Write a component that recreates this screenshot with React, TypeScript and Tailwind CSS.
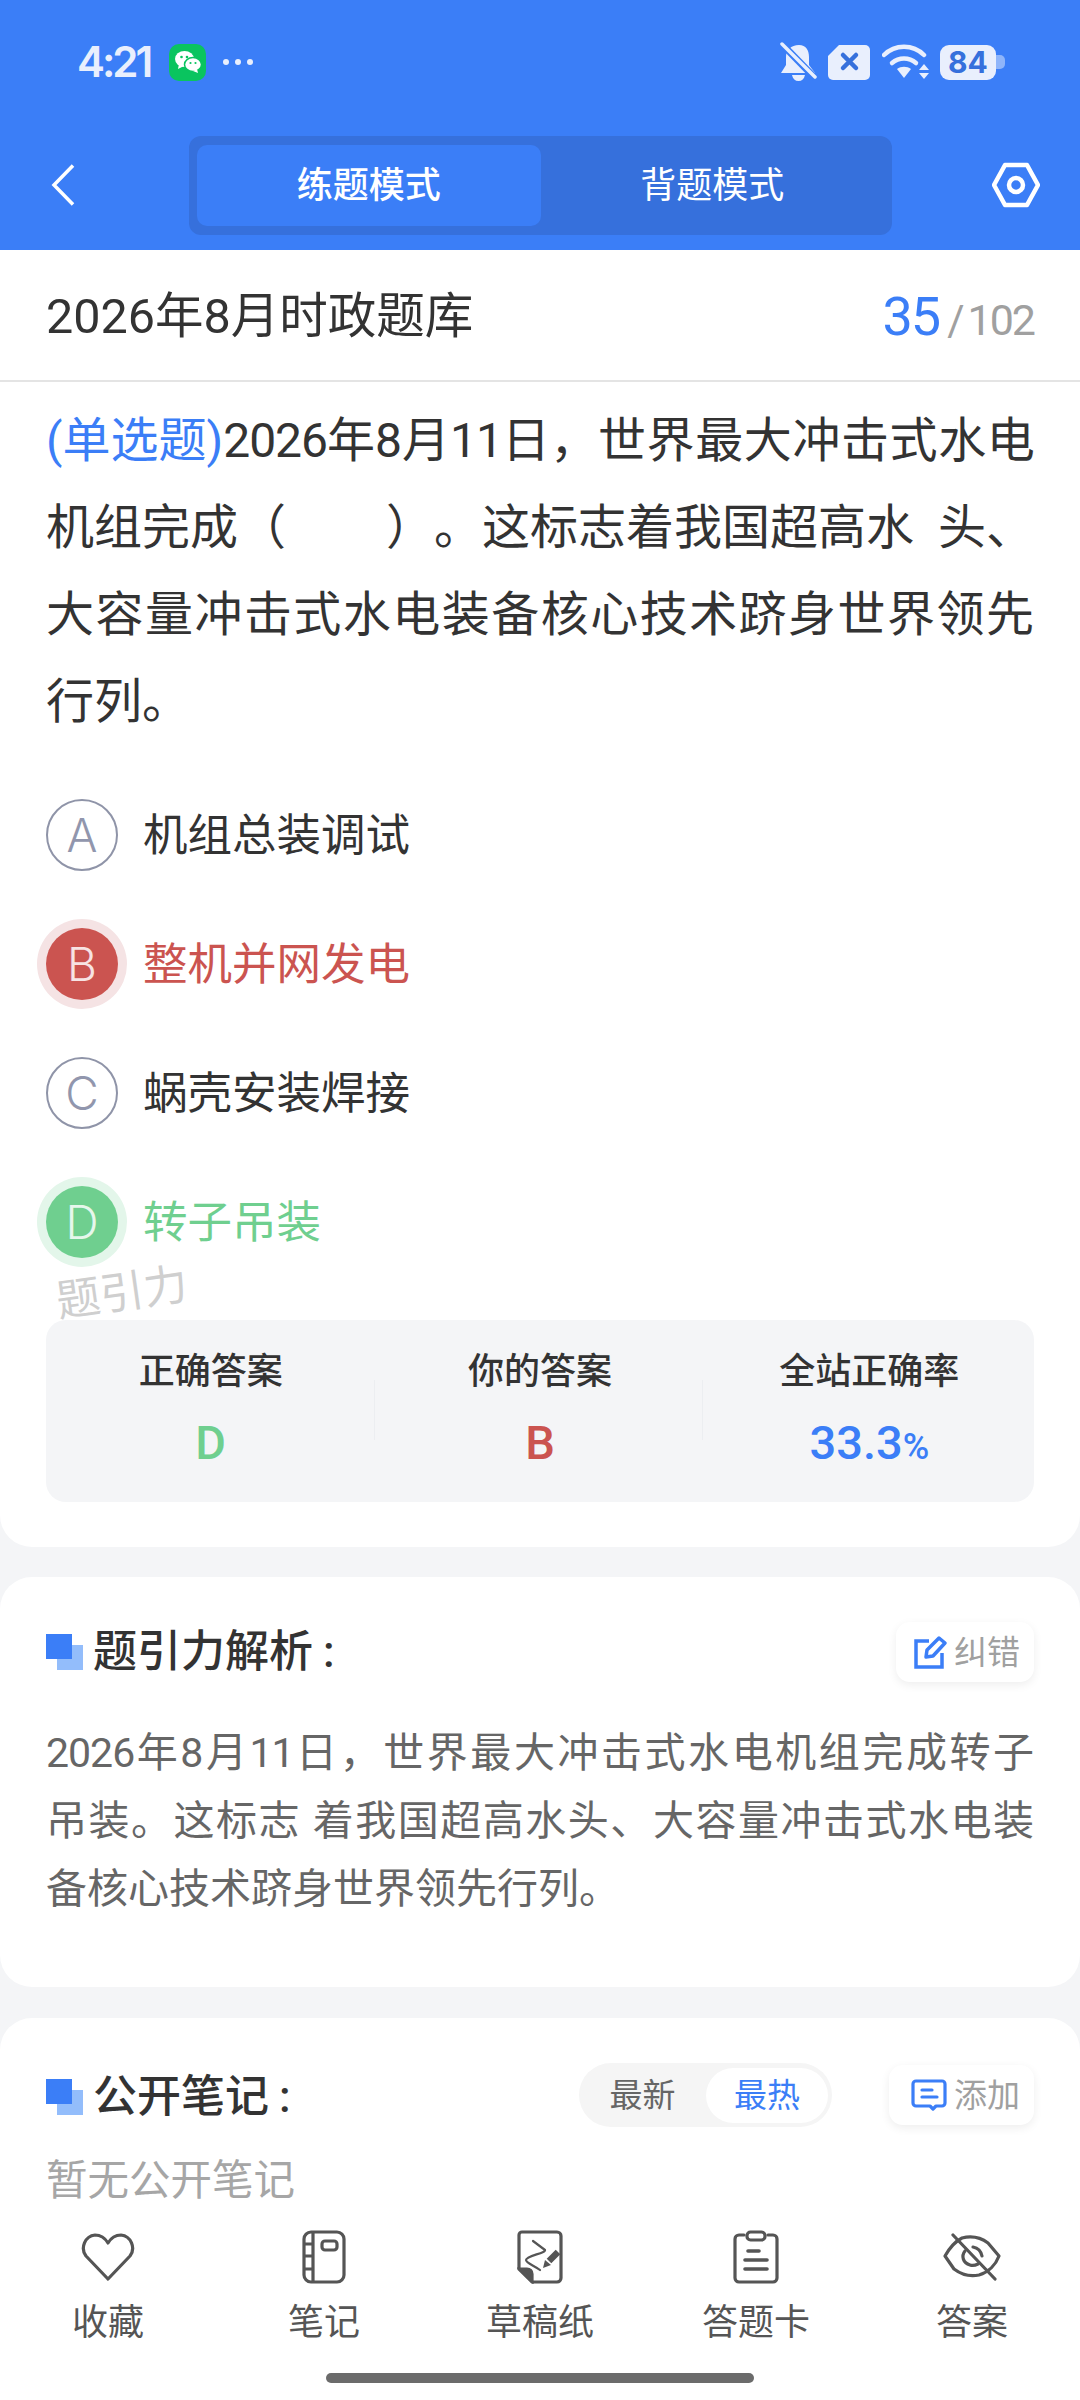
import type { ReactNode } from 'react'

const cjk = { fontFamily: '"Roboto", "Noto Sans CJK SC", sans-serif' }

const options = [
  { key: 'A', text: '机组总装调试', state: 'idle' },
  { key: 'B', text: '整机并网发电', state: 'wrong' },
  { key: 'C', text: '蜗壳安装焊接', state: 'idle' },
  { key: 'D', text: '转子吊装', state: 'right' },
]

function Bullet() {
  return (
    <span className="relative block w-[37px] h-[36px] shrink-0">
      <span className="absolute left-[11px] top-[11px] w-[26px] h-[25px] bg-[#93bdfb]" />
      <span className="absolute left-0 top-0 w-[26px] h-[25px] bg-[#3b7ef7]" />
    </span>
  )
}

function StatusIcons() {
  return (
    <div className="flex items-center">
      <svg width="38" height="40" viewBox="0 0 38 40" fill="#e9effd">
        <path d="M20 3c7 0 10 5 10 12v8l6 8H2l5-8v-8c0-7 5-12 13-12z" />
        <path d="M13 33h13c-1 4-3 6-6.500 6S14 37 13 33z" />
        <path d="M2 1l34 35" stroke="#3b7ef7" strokeWidth="7" />
        <path d="M3 2l33 33" stroke="#e9effd" strokeWidth="3.500" strokeLinecap="round" />
      </svg>
      <svg className="ml-[10px]" width="44" height="36" viewBox="0 0 44 36">
        <path d="M12 1h26a5 5 0 0 1 5 5v25a5 5 0 0 1-5 5H6a5 5 0 0 1-5-5V12z" fill="#e9effd" />
        <path d="M16 11l13 13M29 11L16 24" stroke="#3670dc" strokeWidth="4.500" strokeLinecap="round" />
      </svg>
      <svg className="ml-[11px]" width="48" height="36" viewBox="0 0 48 36" fill="none">
        <path d="M2 11c11-11 29-11 40 0" stroke="#e9effd" strokeWidth="4.500" strokeLinecap="round" />
        <path d="M10 19c7-6 17-6 24 0" stroke="#e9effd" strokeWidth="4.500" strokeLinecap="round" />
        <path d="M15 25c4-3 10-3 14 0l-7 9z" fill="#e9effd" />
        <path d="M42 20l5 6H37zM42 35l5-6H37z" fill="#e9effd" />
      </svg>
      <div className="ml-[10px] flex items-center">
        <div
          className="w-[56px] h-[35px] bg-[#e9effd] rounded-[9px] flex items-center justify-center text-[30px] font-bold text-[#3670dc]"
          style={{ fontFamily: '"Inter", sans-serif' }}
        >
          84
        </div>
        <div className="w-[9px] h-[14px] bg-[#8fb5fa] rounded-r-[5px]" />
      </div>
    </div>
  )
}

function WeChat() {
  return (
    <div className="w-[37px] h-[37px] rounded-[10px] bg-[#0ac45f] flex items-center justify-center">
      <svg width="28" height="24" viewBox="0 0 28 24">
        <ellipse cx="10.500" cy="9" rx="9.500" ry="8" fill="#fff" />
        <path d="M5 14l-1 5 6-3z" fill="#fff" />
        <ellipse cx="19" cy="14.500" rx="8.500" ry="7" fill="#fff" stroke="#0ac45f" strokeWidth="1.500" />
        <path d="M23 19l1 4-5-2z" fill="#fff" />
        <circle cx="7.500" cy="7" r="1.300" fill="#0ac45f" />
        <circle cx="13" cy="7" r="1.300" fill="#0ac45f" />
        <circle cx="16.500" cy="13" r="1.100" fill="#0ac45f" />
        <circle cx="21.500" cy="13" r="1.100" fill="#0ac45f" />
      </svg>
    </div>
  )
}

function HeaderBar() {
  return (
    <header className="bg-[#3b7ef7] h-[250px] shrink-0">
      <div className="h-[136px] pl-[77px] pr-[75px] pb-[12px] flex items-center justify-between">
        <div className="flex items-center">
          <span
            className="w-[79px] text-[42px] font-semibold tracking-[-3px] text-[#e9effd] leading-none"
            style={{ fontFamily: '"Inter", sans-serif' }}
          >
            4:21
          </span>
          <span className="ml-[13px]">
            <WeChat />
          </span>
          <span className="ml-[17px] flex gap-[6px]">
            <i className="block w-[6px] h-[6px] rounded-full bg-[#e9effd]" />
            <i className="block w-[6px] h-[6px] rounded-full bg-[#e9effd]" />
            <i className="block w-[6px] h-[6px] rounded-full bg-[#e9effd]" />
          </span>
        </div>
        <StatusIcons />
      </div>
      <div className="flex items-start">
        <svg className="ml-[51px] mt-[28px]" width="24" height="42" viewBox="0 0 24 42" fill="none">
          <path d="M22 1.500L3 21l19 19.500" stroke="#fff" strokeWidth="3.500" />
        </svg>
        <div className="ml-[114px] w-[703px] h-[99px] rounded-[12px] bg-[#3670dc] p-[9px_8px] grid grid-cols-2 text-[36px] font-medium text-white leading-none">
          <div className="rounded-[10px] bg-[#3b7ef7] flex items-center justify-center">练题模式</div>
          <div className="flex items-center justify-center font-normal">背题模式</div>
        </div>
        <svg className="ml-[100px] mt-[26px]" width="48" height="46" viewBox="0 0 48 46" fill="none">
          <path d="M13 3h22l11 20-11 20H13L2 23z" stroke="#fff" strokeWidth="4.500" strokeLinejoin="round" />
          <circle cx="24" cy="23" r="7" stroke="#fff" strokeWidth="4.500" />
        </svg>
      </div>
    </header>
  )
}

function OptionRow({ k, text, state }: { k: string; text: string; state: string }) {
  const circle =
    state === 'wrong'
      ? 'bg-[#cb5450] text-[#f7e3e3] ring-[9px] ring-[#f5e3e4]'
      : state === 'right'
        ? 'bg-[#6fcf8f] text-[#e6f7ec] ring-[9px] ring-[#e3f6ea]'
        : 'border-2 border-[#8f94a8] text-[#9196ad]'
  const label = state === 'wrong' ? 'text-[#cb5450]' : state === 'right' ? 'text-[#6fcf8f]' : 'text-[#333333]'
  return (
    <div className="h-[129px] flex items-center">
      <div
        className={`w-[72px] h-[72px] -mt-[4px] rounded-full flex items-center justify-center text-[46px] font-light leading-none ${circle}`}
        style={{ fontFamily: '"Inter", sans-serif' }}
      >
        {k}
      </div>
      <span className={`ml-[25px] text-[44.500px] leading-none ${label}`}>{text}</span>
    </div>
  )
}

function Stat({ label, children }: { label: string; children: ReactNode }) {
  return (
    <div className="flex flex-col items-center">
      <span className="text-[36px] font-medium text-[#333333] leading-[44px]">{label}</span>
      <span className="mt-[23px] h-[50px] flex items-center text-[47px] font-medium leading-none">{children}</span>
    </div>
  )
}

function QuestionCard() {
  return (
    <section className="bg-white rounded-b-[32px] relative pb-[45px]">
      <div className="h-[132px] pt-[4px] px-[46px] flex items-center justify-between border-b-2 border-[#e4e4e4]">
        <h1 className="text-[48.500px] font-normal text-[#333333] leading-none">2026年8月时政题库</h1>
        <div className="flex items-baseline leading-none">
          <span className="text-[54px] tracking-[-2px] text-[#3b7ef7]">35</span>
          <span className="ml-[8px] text-[42px] text-[#a0a0a0]">/</span>
          <span className="ml-[3px] text-[43px] tracking-[-2px] text-[#a0a0a0]">102</span>
        </div>
      </div>
      <div className="px-[46px] pt-[15px] text-[48px] leading-[87px] text-[#333333]">
        <div className="whitespace-nowrap">
          <span className="text-[#3b7ef7]">(单选题)</span>
          <span className="tracking-[-1px]">2026</span>年8月<span className="tracking-[-1px]">11</span>日，
          <span className="tracking-[0.6px]">世界最大冲击式水电</span>
        </div>
        <div className="whitespace-nowrap">
          机组完成（<span className="inline-block w-[100px]" />）。这标志着我国超高水<span className="inline-block w-[24px]" />头、
        </div>
        <div className="[text-align-last:justify]">大容量冲击式水电装备核心技术跻身世界领先</div>
        <div>行列。</div>
      </div>
      <div className="px-[46px] mt-[27px]">
        {options.map(o => (
          <OptionRow key={o.key} k={o.key} text={o.text} state={o.state} />
        ))}
      </div>
      <span className="absolute left-[56px] top-[1021px] text-[44px] leading-none text-[#cfcfcf] -rotate-[8deg]">题引力</span>
      <div className="mx-[46px] mt-[32px] h-[182px] rounded-[20px] bg-[#f4f5f7] grid grid-cols-3 pt-[30px] relative">
        <Stat label="正确答案">
          <span className="text-[#6fcf8f]">D</span>
        </Stat>
        <Stat label="你的答案">
          <span className="text-[#cb5450]">B</span>
        </Stat>
        <Stat label="全站正确率">
          <span className="text-[#3b7ef7]">
            33.3<span className="text-[36px]">%</span>
          </span>
        </Stat>
        <i className="absolute left-[328px] top-[60px] h-[60px] w-[1px] bg-[#eceef1]" />
        <i className="absolute left-[656px] top-[60px] h-[60px] w-[1px] bg-[#eceef1]" />
      </div>
    </section>
  )
}

function ChipButton({ icon, label, w }: { icon: ReactNode; label: string; w: string }) {
  return (
    <div className={`${w} h-[60px] rounded-[14px] bg-white shadow-[0_3px_10px_rgba(0,0,0,0.07)] flex items-center justify-end pr-[14px] text-[33px] leading-none text-[#a0a0a0]`}>
      {icon}
      <span className="ml-[7px]">{label}</span>
    </div>
  )
}

function AnalysisCard() {
  return (
    <section className="bg-white rounded-[32px] mt-[30px] h-[410px] px-[46px]">
      <div className="pt-[45px] flex items-center justify-between">
        <div className="flex items-center">
          <Bullet />
          <h2 className="ml-[10px] text-[44px] font-medium text-[#333333] leading-none">
            题引力解析<span className="ml-[10px]">:</span>
          </h2>
        </div>
        <ChipButton
          w="w-[138px]"
          label="纠错"
          icon={
            <svg width="34" height="34" viewBox="0 0 34 34" fill="none" stroke="#3b7ef7" strokeWidth="3.500">
              <path d="M16 6H3v26h26V18" />
              <path d="M13 22l1-7L26 3l6 5-12 13z" strokeLinejoin="round" />
            </svg>
          }
        />
      </div>
      <div className="mt-[37px] text-[41px] leading-[68px] text-[#666666]">
        <div className="[text-align-last:justify]">
          <span className="tracking-[-1px]">2026</span>年8月<span className="tracking-[-1px]">11</span>日，世界最大冲击式水电机组完成转子
        </div>
        <div className="[text-align-last:justify]">吊装。这标志 着我国超高水头、大容量冲击式水电装</div>
        <div>备核心技术跻身世界领先行列。</div>
      </div>
    </section>
  )
}

function NotesCard() {
  return (
    <section className="bg-white rounded-t-[32px] mt-[31px] px-[46px] pb-[100px]">
      <div className="pt-[45px] flex items-center justify-between">
        <div className="flex items-center pt-[3px]">
          <Bullet />
          <h2 className="ml-[10px] text-[44px] font-medium text-[#333333] leading-none">
            公开笔记<span className="ml-[10px]">:</span>
          </h2>
        </div>
        <div className="flex items-center">
          <div className="w-[253px] h-[64px] rounded-full bg-[#f5f5f5] flex items-center text-[33px] leading-none">
            <span className="w-[127px] text-center text-[#666666]">最新</span>
            <span className="w-[122px] h-[55px] rounded-full bg-white text-[#3b7ef7] flex items-center justify-center">最热</span>
          </div>
          <div className="ml-[57px]">
            <ChipButton
              w="w-[145px]"
              label="添加"
              icon={
                <svg width="36" height="32" viewBox="0 0 36 32" fill="none" stroke="#3b7ef7" strokeWidth="3.200" strokeLinecap="round" strokeLinejoin="round">
                  <path d="M5 2h26a3 3 0 0 1 3 3v19a3 3 0 0 1-3 3H25l-3 3-3-3H5a3 3 0 0 1-3-3V5a3 3 0 0 1 3-3z" />
                  <path d="M11 11h10M11 18h15" />
                </svg>
              }
            />
          </div>
        </div>
      </div>
      <p className="mt-[26px] text-[41.500px] leading-[56px] text-[#a6a6a6]">暂无公开笔记</p>
    </section>
  )
}

const navStroke = { fill: 'none', stroke: '#555555', strokeWidth: 3.2 }

const navItems: { label: string; icon: ReactNode }[] = [
  {
    label: '收藏',
    icon: (
      <svg width="54" height="48" viewBox="0 0 54 48" {...navStroke} strokeLinejoin="round">
        <path d="M27 46L5 23C-1 15 4 3 14 2c6 0 10 3 13 8 3-5 7-8 13-8 10 1 15 13 9 21z" />
      </svg>
    ),
  },
  {
    label: '笔记',
    icon: (
      <svg width="44" height="54" viewBox="0 0 44 54" {...navStroke}>
        <rect x="2" y="2" width="40" height="50" rx="7" />
        <path d="M11 2v50M2 14h9M2 26h9M2 39h9" />
        <rect x="20" y="11" width="15" height="9" rx="3" />
      </svg>
    ),
  },
  {
    label: '草稿纸',
    icon: (
      <svg width="47" height="54" viewBox="0 0 47 54" {...navStroke}>
        <path d="M5 2h35a4 4 0 0 1 4 4v42a4 4 0 0 1-4 4H15L2 39V5a3 3 0 0 1 3-3z" />
        <path d="M3 39h7c3 0 5 2 5 5v7z" fill="#555555" />
        <path d="M16 11l12 9c1 3-19 6-19 10 0 3 9 6 14 10" strokeWidth="2.200" strokeLinecap="round" strokeLinejoin="round" />
        <path d="M32 31l9-9" strokeWidth="6.500" />
        <path d="M26 38l2-8 6 5z" fill="#555555" stroke="none" />
      </svg>
    ),
  },
  {
    label: '答题卡',
    icon: (
      <svg width="46" height="54" viewBox="0 0 46 54" {...navStroke} strokeLinecap="round">
        <path d="M11 5H6a4 4 0 0 0-4 4v39a4 4 0 0 0 4 4h34a4 4 0 0 0 4-4V9a4 4 0 0 0-4-4h-5" />
        <rect x="14" y="2" width="18" height="8" rx="3.500" />
        <path d="M15 21h11M12 30h22M12 39h22" strokeWidth="3.600" />
      </svg>
    ),
  },
  {
    label: '答案',
    icon: (
      <svg width="58" height="48" viewBox="0 0 58 48" {...navStroke} strokeLinecap="round" strokeLinejoin="round">
        <path d="M2 23c4-7 9-14 17-18 8-2 18-1 26 5l11 13c-3 8-10 16-20 19-9 2-17 0-25-6z" />
        <path d="M22 18c-4 5-2 12 5 14 3 1 6 0 8-1M30 14c5 1 8 4 9 9" />
        <path d="M10 2l42 44" />
      </svg>
    ),
  },
]

function BottomNav() {
  return (
    <nav className="shrink-0 bg-white h-[195px] relative">
      <div className="grid grid-cols-5">
        {navItems.map(item => (
          <div key={item.label} className="flex flex-col items-center pt-[24px]">
            <div className="h-[56px] flex items-center justify-center">{item.icon}</div>
            <span className="mt-[20px] text-[36px] leading-none text-[#555555]">{item.label}</span>
          </div>
        ))}
      </div>
      <div className="absolute left-[326px] bottom-[17px] w-[428px] h-[10px] rounded-full bg-[#6b6b6b]" />
    </nav>
  )
}

export default function App() {
  return (
    <div className="w-[1080px] h-[2400px] overflow-hidden flex flex-col bg-[#f4f5f7] [text-spacing-trim:space-all]" style={cjk}>
      <HeaderBar />
      <main className="flex-1 overflow-hidden min-h-0">
        <QuestionCard />
        <AnalysisCard />
        <NotesCard />
      </main>
      <BottomNav />
    </div>
  )
}
